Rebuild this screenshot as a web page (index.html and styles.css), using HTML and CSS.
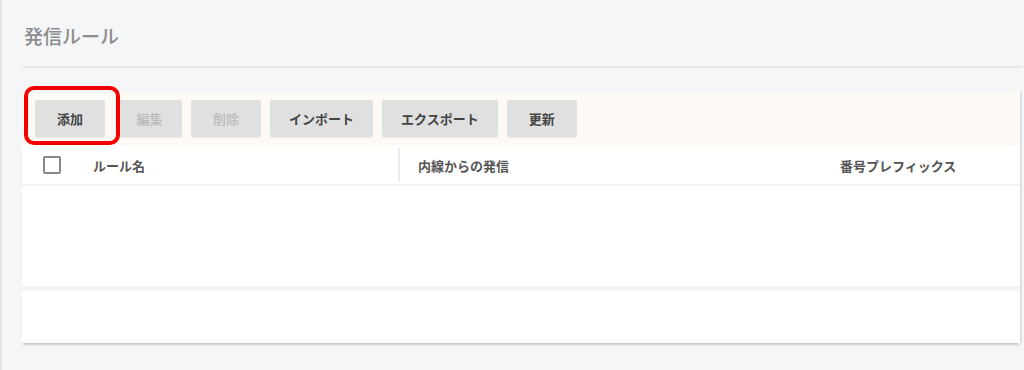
FILE: index.html
```html
<!DOCTYPE html>
<html lang="ja">
<head>
<meta charset="utf-8">
<title>発信ルール</title>
<link rel="stylesheet" href="styles.css">
</head>
<body>
<div class="page">
  <header class="title-bar">
    <h1 class="title">発信ルール</h1>
  </header>
  <section class="panel">
    <div class="toolbar">
      <button class="btn btn-short">添加</button>
      <button class="btn btn-short btn-narrow is-disabled">編集</button>
      <button class="btn btn-short is-disabled">削除</button>
      <button class="btn">インポート</button>
      <button class="btn">エクスポート</button>
      <button class="btn btn-short">更新</button>
      <span class="highlight"></span>
    </div>
    <div class="table">
      <div class="thead">
        <div class="cell cell-check"><span class="checkbox"></span></div>
        <div class="cell cell-name">ルール名</div>
        <div class="cell cell-ext">内線からの発信</div>
        <div class="cell cell-prefix">番号プレフィックス</div>
      </div>
      <div class="row row-tall"></div>
      <div class="row row-short"></div>
    </div>
  </section>
</div>
</body>
</html>
```
FILE: styles.css
```css
* { box-sizing: border-box; }
html, body { margin: 0; padding: 0; }
body {
  background: #f5f6f8;
  font-family: "Noto Sans CJK JP", "Noto Sans", sans-serif;
  width: 1024px;
  height: 370px;
  overflow: hidden;
}
.page {
  border-left: 2px solid #e3e5e8;
  height: 370px;
  padding-left: 20px;
  width: 1024px;
}
.title-bar {
  height: 68px;
  border-bottom: 2px solid #e7e8ea;
  width: 1000px;
  display: flex;
  align-items: center;
  padding-left: 2px;
  padding-top: 4px;
}
.title {
  margin: 0;
  font-size: 19px;
  font-weight: 500;
  color: #8c8c8c;
  letter-spacing: 0;
}
.panel {
  margin-top: 24px;
  width: 1000px;
  border-right: 2px solid #e0e1e3;
}
.toolbar {
  position: relative;
  background: #fdfaf5;
  height: 54px;
  display: flex;
  align-items: flex-start;
  gap: 9px;
  padding: 8px 0 0 13px;
}
.btn {
  height: 37px;
  border: none;
  background: #e0e0e0;
  border-radius: 2px;
  padding: 0 19px;
  font-family: inherit;
  font-size: 13px;
  font-weight: 700;
  color: #444;
  box-shadow: 0 1px 1px rgba(0,0,0,0.06);
}
.btn-short { width: 70px; padding: 0; }
.btn-short:first-child { margin-right: 3px; }
.btn-narrow { width: 65px; }
.btn.is-disabled {
  color: #b9b9b9;
  font-weight: 500;
}
.highlight {
  position: absolute;
  left: 2px;
  top: -6px;
  width: 96px;
  height: 59px;
  border: 4px solid #f20000;
  border-radius: 10px;
}
.table {
  background: #fff;
  box-shadow: 0 3px 2px -1px rgba(0,0,0,0.18);
}
.thead {
  display: grid;
  grid-template-columns: 58px 320px 420px 1fr;
  height: 40px;
  border-bottom: 2px solid #f0f1f3;
  align-items: center;
  font-size: 13px;
  font-weight: 700;
  color: #555;
}
.cell { height: 100%; display: flex; align-items: center; }
.cell-check { justify-content: center; padding-left: 1px; }
.checkbox {
  width: 18px;
  height: 18px;
  border: 2px solid #8a8a8a;
  border-radius: 2px;
  background: #fff;
}
.cell-name {
  padding-left: 13px;
  border-right: 2px solid #ececec;
  height: 34px;
}
.cell-ext { padding-left: 18px; }
.cell-prefix { padding-left: 20px; }
.row-tall {
  height: 105px;
  border-bottom: 5px solid #f3f4f6;
}
.row-short {
  height: 52px;
}
```
